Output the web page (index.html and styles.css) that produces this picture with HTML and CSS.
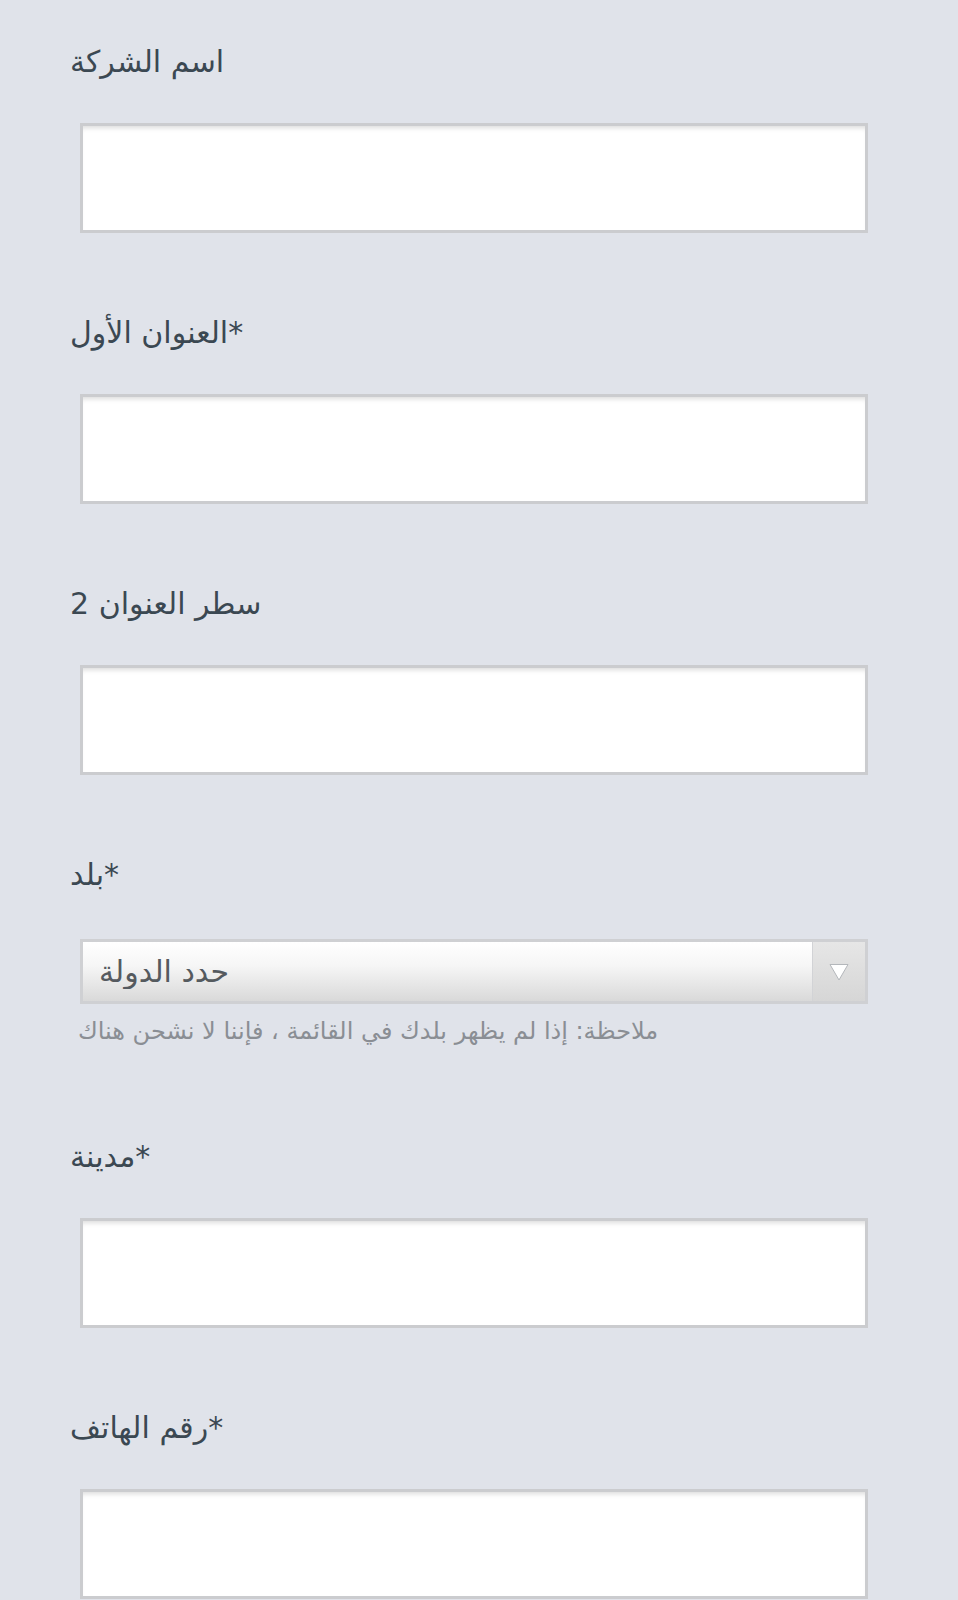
FILE: index.html
```html
<!DOCTYPE html>
<html lang="ar">
<head>
    <meta charset="UTF-8" />
    <meta name="viewport" content="width=device-width, initial-scale=1.0" />
    <title>عنوان الشحن</title>
    <link rel="stylesheet" href="styles.css">
</head>
<body>
    <form class="form">
        <div class="field">
            <label for="company">اسم الشركة</label>
            <input class="text-input" id="company" type="text" />
        </div>

        <div class="field">
            <label for="address1">العنوان الأول*</label>
            <input class="text-input" id="address1" type="text" />
        </div>

        <div class="field">
            <label for="address2">سطر العنوان 2</label>
            <input class="text-input" id="address2" type="text" />
        </div>

        <div class="field field-select">
            <label for="country">بلد*</label>
            <div class="select">
                <select id="country">
                    <option>حدد الدولة</option>
                </select>
                <span class="select-arrow">
                    <svg width="22" height="20" viewBox="0 0 22 20">
                        <path d="M2 2.5 L20 2.5 L11 18 Z" fill="#fff" stroke="#b4b7bb" stroke-width="1" />
                    </svg>
                </span>
            </div>
            <p class="note">ملاحظة: إذا لم يظهر بلدك في القائمة ، فإننا لا نشحن هناك</p>
        </div>

        <div class="field">
            <label for="city">مدينة*</label>
            <input class="text-input" id="city" type="text" />
        </div>

        <div class="field">
            <label for="phone">رقم الهاتف*</label>
            <input class="text-input" id="phone" type="text" />
        </div>
    </form>
</body>
</html>
```

FILE: styles.css
```css
/* 기본 */
html, body {
    margin: 0;
    padding: 0;
    background: #e0e3ea;
    font-family: "DejaVu Sans", "Noto Sans", sans-serif;
    color: #3b4852;
}
.form {
    padding: 42px 0 0 70px;
    margin: 0;
}
.field {
    margin-bottom: 80px;
}
.field label {
    display: block;
    font-size: 30px;
    line-height: 40px;
    direction: ltr;
    text-align: left;
}

/* 입력칸 */
.text-input {
    display: block;
    box-sizing: border-box;
    width: 788px;
    height: 110px;
    margin: 41px 0 0 10px;
    border: 3px solid #cbcccf;
    border-radius: 0;
    background: #fff;
    box-shadow: inset 0 5px 5px -3px rgba(0, 0, 0, 0.14);
    outline: none;
    font-size: 28px;
}

/* 국가 선택 */
.field-select {
    margin-bottom: 89px;
}
.select {
    position: relative;
    box-sizing: border-box;
    width: 788px;
    height: 65px;
    margin: 44px 0 0 10px;
    border: 3px solid #cfd0d3;
    background: linear-gradient(#ffffff 0%, #f6f6f6 40%, #d9d9d9 100%);
}
.select select {
    -webkit-appearance: none;
    appearance: none;
    width: 100%;
    height: 100%;
    border: none;
    background: transparent;
    padding: 0 0 0 16px;
    font-family: "DejaVu Sans", sans-serif;
    font-size: 30px;
    color: #555a5f;
    outline: none;
}
.select-arrow {
    position: absolute;
    top: 0;
    right: 0;
    bottom: 0;
    width: 52px;
    display: flex;
    align-items: center;
    justify-content: center;
    border-left: 1px solid #d2d3d6;
    background: linear-gradient(#e6e6e6, #d6d6d6);
    pointer-events: none;
}
.note {
    margin: 10px 0 0 8px;
    font-size: 24px;
    line-height: 34px;
    color: #8a8e94;
}
```
